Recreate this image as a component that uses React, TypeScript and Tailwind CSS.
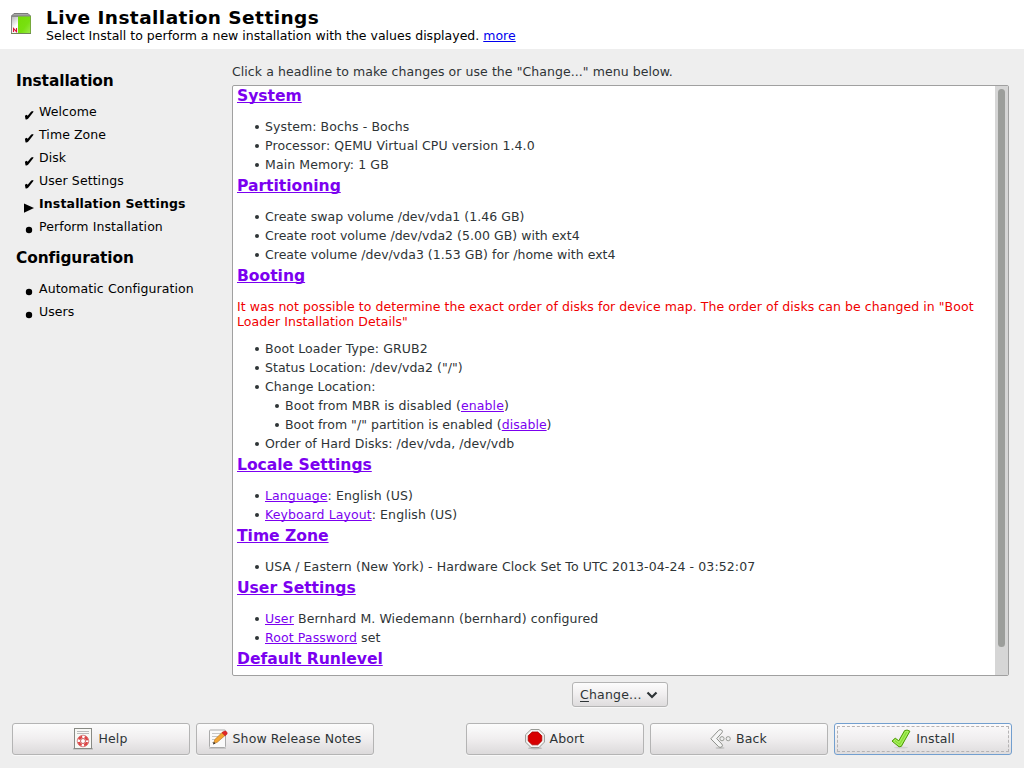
import type { ReactNode } from "react";

const CheckMark = () => (
  <svg width="10" height="10" viewBox="0 0 10 10"><path d="M.9 5.8 2.6 4.7 3.7 5.7 7.2 1.6 9.4 1.100 9.2 2.200 4.300 8.4Q2.8 9.8 1.5 9.2Z" fill="#000" /></svg>
);
const Arrow = () => (
  <svg width="10" height="11" viewBox="0 0 10 11"><path d="M0 1.5 10 6 0 10.7Z" fill="#000" /></svg>
);
const Dot = () => (
  <svg width="10" height="10" viewBox="0 0 10 10"><circle cx="5" cy="5" r="3.2" fill="#000" /></svg>
);

const Logo = () => (
  <svg width="22" height="24" viewBox="0 0 22 24">
    <defs>
      <linearGradient id="lw" x1="0" y1="0" x2="1" y2="1"><stop offset="0" stopColor="#b4b4b4" /><stop offset=".4" stopColor="#fff" /><stop offset="1" stopColor="#ccc" /></linearGradient>
      <linearGradient id="lg" x1="0" y1="0" x2="1" y2="1"><stop offset="0" stopColor="#74dc06" /><stop offset=".6" stopColor="#78e010" /><stop offset="1" stopColor="#9be84a" /></linearGradient>
    </defs>
    <path d="M4 1.5h14L20.5 4H1.5Z" fill="#a6a6a6" stroke="#7a7a7a" />
    <rect x="1.5" y="4.5" width="19" height="17" fill="url(#lw)" stroke="#888" />
    <path d="M8 4.5h12V21H8Z" fill="url(#lg)" />
    <path d="M20.5 4v17.5" stroke="#76a83c" />
    <path d="M1 21.5h20" stroke="#70855a" />
    <path d="M3.5 20v-3.5l3 3.2v-3.7" fill="none" stroke="#dc1436" strokeWidth="1.1" />
  </svg>
);
const HelpIcon = () => (
  <svg width="20" height="22" viewBox="0 0 20 22">
    <path d="M0 20.8h20" stroke="#b5b5b5" strokeWidth="1.5" />
    <rect x="1.5" y=".5" width="17" height="20" fill="#f8f8f5" stroke="#888a85" />
    <path d="M4 3.5h12M4 5.5h12" stroke="#bbb" />
    <circle cx="10" cy="13" r="4.3" fill="none" stroke="#fff" strokeWidth="3" />
    <circle cx="10" cy="13" r="4.3" fill="none" stroke="#e04545" strokeWidth="2.6" strokeDasharray="4.200 2.550" strokeDashoffset="-1.200" />
    <circle cx="10" cy="13" r="5.8" fill="none" stroke="#d06a6a" strokeWidth=".8" />
    <circle cx="10" cy="13" r="2.5" fill="#fff" stroke="#b33" strokeWidth=".8" />
  </svg>
);
const NotesIcon = () => (
  <svg width="20" height="20" viewBox="0 0 20 20">
    <path d="M1 19.2h17" stroke="#bbb" />
    <rect x="1.5" y="1" width="16" height="17.5" rx="1" fill="#fafafa" stroke="#aaa" />
    <path d="M4 4.5h9M4 7.5h6M4 10.5h4M4 13.5h2" stroke="#c6c6c6" />
    <path d="m5.600 14.600 1.200-4L14.600 3l3 3-8.400 7.300Z" fill="#f4a531" stroke="#b87828" strokeWidth=".7" />
    <path d="m14 3.800 2-1.600q2-.8 3 1.200.6 1.400-.4 2.200l-1.500 1.200Z" fill="#e02828" stroke="#b11" strokeWidth=".5" />
    <path d="m5 15.400.8-2.700 1.700 1.700Z" fill="#333" />
  </svg>
);
const StopIcon = () => (
  <svg width="20" height="22" viewBox="0 0 20 22">
    <ellipse cx="10" cy="20.2" rx="7" ry="1.2" fill="#bbb" />
    <path d="M6 1.500h8l5.400 5.200v7.400L14 19.500H6L.6 14.100V6.700Z" fill="#f4f4f2" stroke="#989a95" />
    <path d="M7.200 4h5.600L16.800 7.800v5.100L12.800 16.800H7.200L3.200 12.900V7.800Z" fill="#d80000" stroke="#a80000" strokeWidth=".8" />
  </svg>
);
const BackIcon = () => (
  <svg width="21" height="20" viewBox="0 0 21 20">
    <ellipse cx="10" cy="19" rx="4.5" ry=".9" fill="#c4c4c4" />
    <path d="M.8 9.800 8.600 1.400Q10-.1 11.600 1 13.300 2.300 11.800 3.900L6.700 9.600 11.900 15.100Q13.200 16.800 11.600 18 10 19 8.600 17.700Z" fill="#f5f5f5" stroke="#8d8f8a" />
    <circle cx="12" cy="9.7" r="2.1" fill="#eee" stroke="#999b96" />
    <circle cx="18.200" cy="9.7" r="2.1" fill="#eee" stroke="#999b96" />
  </svg>
);
const InstallIcon = () => (
  <svg width="20" height="20" viewBox="0 0 20 20">
    <ellipse cx="10" cy="18.6" rx="7" ry="1" fill="#d0d0d0" />
    <path d="M1 12.100 4.200 9.200 7.800 11.800 13.600 1.600Q16 .2 18.900 2.200L10.300 17.400 8 17.800Z" fill="#8ae234" stroke="#4e9a06" strokeLinejoin="round" />
    <path d="M2.700 12.300 4.400 10.700 8.200 13.500 14.500 2.500Q16 1.900 17.300 2.700L9.500 16.300 8.300 16.400Z" fill="none" stroke="#b9f27c" strokeWidth=".8" />
  </svg>
);

type Step = [ReactNode, string, boolean?];

const steps: Step[] = [
  [<CheckMark />, "Welcome"],
  [<CheckMark />, "Time Zone"],
  [<CheckMark />, "Disk"],
  [<CheckMark />, "User Settings"],
  [<Arrow />, "Installation Settings", true],
  [<Dot />, "Perform Installation"],
];
const configSteps: Step[] = [
  [<Dot />, "Automatic Configuration"],
  [<Dot />, "Users"],
];

function StepList({ items }: { items: Step[] }) {
  return (
    <ul className="pl-6">
      {items.map(([icon, label, active]) => (
        <li key={label} className="flex h-[23px] items-center gap-[5px]">
          <span className="pt-[7px]">{icon}</span>
          <span className={active ? "font-bold tracking-[0.15px]" : "tracking-[0.08px]"}>{label}</span>
        </li>
      ))}
    </ul>
  );
}

const Link = ({ children }: { children: ReactNode }) => (
  <a className="text-[#7b00f0] underline decoration-1 underline-offset-[1px] [text-decoration-skip-ink:none]">{children}</a>
);
const Heading = ({ children }: { children: ReactNode }) => (
  <h2 className="mt-[2px] h-[19px] text-[15.6px] leading-[21px] font-bold tracking-[-0.04px] text-[#7b00f0] underline decoration-1 underline-offset-[1px] [text-decoration-skip-ink:none]">{children}</h2>
);
const SideHeading = ({ children }: { children: ReactNode }) => (
  <h2 className="mt-[10px] mb-[9px] h-5 pl-4 text-[15.4px] leading-5 font-bold tracking-[-0.08px]">{children}</h2>
);
const List = ({ children }: { children: ReactNode }) => <ul className="pt-3">{children}</ul>;
const Item = ({ children, nested, wide }: { children: ReactNode; nested?: boolean; wide?: boolean }) => (
  <li className={nested ? "flex h-[19px] items-center pl-[37px]" : "flex h-[19px] items-center pl-[17px]"}>
    <span className="mr-[6px] ml-px h-1 w-1 shrink-0 rounded-full bg-[#2e3436]" />
    <span className={wide ? "whitespace-pre tracking-[0.1px]" : "whitespace-pre tracking-[0.03px]"}>{children}</span>
  </li>
);

function Button({ icon, label, focused }: { icon: ReactNode; label: string; focused?: boolean }) {
  return (
    <button
      className={
        focused
          ? "flex h-8 w-[178px] rounded-[3px] border border-[#729fcf] bg-linear-to-b from-[#fbfafb] via-[#f0eeef] to-[#dedcdd] p-[2px]"
          : "flex h-8 w-[178px] rounded-[3px] border border-[#b4b4b4] bg-linear-to-b from-[#fcfcfc] via-[#f0eeef] to-[#dcdadb] p-[2px] shadow-[0_1px_0_#f8f8f8]"
      }
    >
      <span className={focused ? "flex h-full w-full items-center justify-center gap-[5px] border border-dashed border-[#b5b3b4]" : "flex h-full w-full items-center justify-center gap-[5px] border border-transparent pr-px"}>
        {icon}
        <span className="pb-[2px] tracking-[0.13px]">{label}</span>
      </span>
    </button>
  );
}

export default function App() {
  return (
    <div className="flex h-[768px] w-[1024px] flex-col overflow-hidden bg-[#eeeeee] font-['DejaVu_Sans',sans-serif] text-[12.5px] leading-[15px] tracking-[0.065px] text-[#2e3436]">
      <header className="flex h-[49px] bg-white pl-[10px] text-black">
        <div className="w-9 pt-3"><Logo /></div>
        <div className="pt-[7px]">
          <h1 className="h-[21px] text-[18.5px] leading-[21px] font-bold tracking-[0.45px]">Live Installation Settings</h1>
          <p className="tracking-[0.01px]">Select Install to perform a new installation with the values displayed. <a className="text-[#0000ee] underline underline-offset-[1px]">more</a></p>
        </div>
      </header>

      <div className="flex h-[660px]">
        <aside className="w-[232px] pt-3 text-black">
          <SideHeading>Installation</SideHeading>
          <StepList items={steps} />
          <SideHeading>Configuration</SideHeading>
          <StepList items={configSteps} />
        </aside>

        <main className="w-[777px] pt-[15px]">
          <p className="mb-[6px]">Click a headline to make changes or use the "Change..." menu below.</p>
          <section className="flex h-[591px] overflow-hidden rounded-[2px] border border-[#a0a0a0] bg-white">
            <div className="-mt-[2px] flex-1 pl-1">
              <Heading>System</Heading>
              <List>
                <Item wide>System: Bochs - Bochs</Item>
                <Item wide>Processor: QEMU Virtual CPU version 1.4.0</Item>
                <Item wide>Main Memory: 1 GB</Item>
              </List>
              <Heading>Partitioning</Heading>
              <List>
                <Item>Create swap volume /dev/vda1 (1.46 GB)</Item>
                <Item>Create root volume /dev/vda2 (5.00 GB) with ext4</Item>
                <Item>Create volume /dev/vda3 (1.53 GB) for /home with ext4</Item>
              </List>
              <Heading>Booting</Heading>
              <p className="mt-[14px] -mb-[2px] whitespace-nowrap text-[#f00000]">
                It was not possible to determine the exact order of disks for device map. The order of disks can be changed in "Boot<br />Loader Installation Details"
              </p>
              <List>
                <Item wide>Boot Loader Type: GRUB2</Item>
                <Item>Status Location: /dev/vda2 ("/")</Item>
                <Item wide>Change Location:</Item>
                <Item nested wide>Boot from MBR is disabled (<Link>enable</Link>)</Item>
                <Item nested>Boot from "/" partition is enabled (<Link>disable</Link>)</Item>
                <Item>Order of Hard Disks: /dev/vda, /dev/vdb</Item>
              </List>
              <Heading>Locale Settings</Heading>
              <List>
                <Item wide><Link>Language</Link>: English (US)</Item>
                <Item wide><Link>Keyboard Layout</Link>: English (US)</Item>
              </List>
              <Heading>Time Zone</Heading>
              <List>
                <Item wide>USA / Eastern (New York) - Hardware Clock Set To UTC 2013-04-24 - 03:52:07</Item>
              </List>
              <Heading>User Settings</Heading>
              <List>
                <Item wide><Link>User</Link> Bernhard M. Wiedemann (bernhard) configured</Item>
                <Item wide><Link>Root Password</Link> set</Item>
              </List>
              <Heading>Default Runlevel</Heading>
            </div>
            <div className="w-[13px] bg-[#d6d6d6] pt-[3px] pl-[3px]">
              <div className="h-[558px] w-[7px] rounded-full bg-[#9c9e9b]" />
            </div>
          </section>
          <div className="flex pt-[6px] pl-[340px]">
            <button className="flex h-[25px] w-24 items-center rounded-[3px] border border-[#b4b4b4] bg-linear-to-b from-[#fcfcfc] via-[#f0eeef] to-[#dedcdd] pl-[7px] shadow-[0_1px_0_#f8f8f8]">
              <span className="tracking-[0.2px]"><span className="underline underline-offset-[2px]">C</span>hange...</span>
              <svg className="ml-1" width="12" height="8" viewBox="0 0 12 8"><path d="m1.500 1.500 4.500 4.500 4.500-4.500" fill="none" stroke="#2e3436" strokeWidth="2.200" /></svg>
            </button>
          </div>
        </main>
      </div>

      <footer className="flex justify-between px-3 pt-[14px]">
        <div className="flex gap-[6px]">
          <Button icon={<HelpIcon />} label="Help" />
          <Button icon={<NotesIcon />} label="Show Release Notes" />
        </div>
        <div className="flex gap-[6px]">
          <Button icon={<StopIcon />} label="Abort" />
          <Button icon={<BackIcon />} label="Back" />
          <Button icon={<InstallIcon />} label="Install" focused />
        </div>
      </footer>
    </div>
  );
}
